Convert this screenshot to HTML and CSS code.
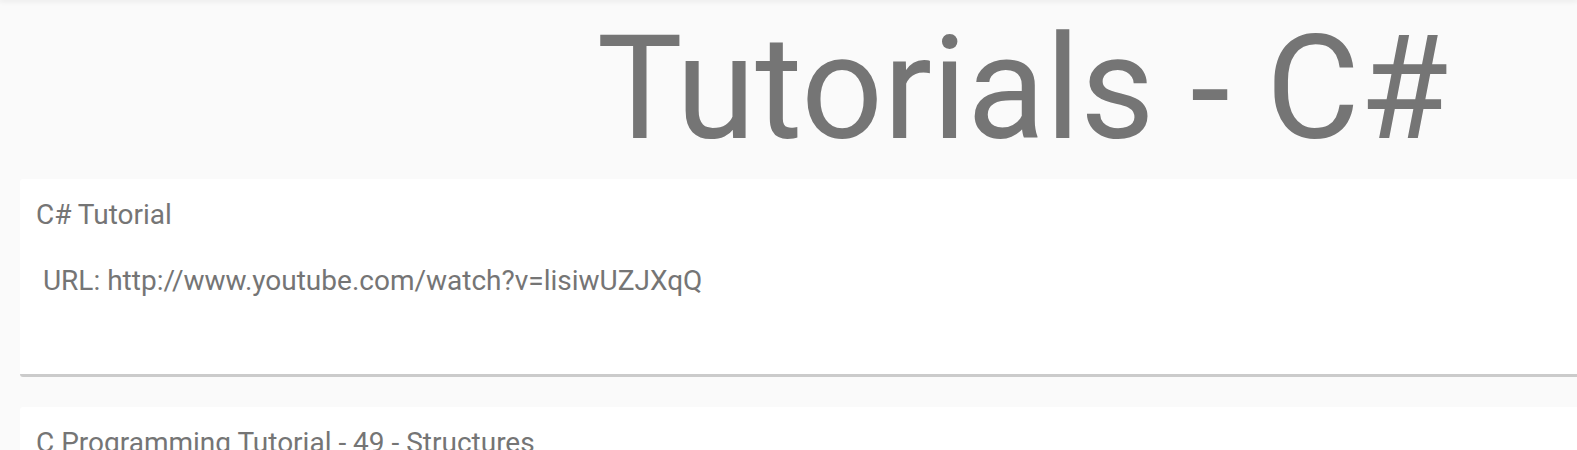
FILE: index.html
```html
<!DOCTYPE html>
<html>
<head>
<meta charset="utf-8">
<title>Tutorials - C#</title>
<link rel="stylesheet" href="styles.css">
</head>
<body>
<div class="topbar"></div>
<main class="page">
  <h1 class="title">Tutorials - C#</h1>
  <section class="card">
    <div class="card-title">C# Tutorial</div>
    <div class="card-url">&nbsp;URL: http://www.youtube.com/watch?v=lisiwUZJXqQ</div>
  </section>
  <section class="card">
    <div class="card-title">C Programming Tutorial - 49 - Structures</div>
    <div class="card-url">&nbsp;URL: http://www.youtube.com/watch?v=</div>
  </section>
</main>
</body>
</html>
```
FILE: styles.css
```css
html, body {
  margin: 0;
  padding: 0;
  background: #fafafa;
  overflow: hidden;
}
body {
  font-family: Roboto, "Liberation Sans", sans-serif;
  color: #757575;
}
.topbar {
  height: 0;
  box-shadow: 0 0 5px 1px rgba(0, 0, 0, 0.12);
}
.page {
  width: 2005px;
  padding: 0 20px;
  display: flex;
  flex-direction: column;
  gap: 30px;
}
.title {
  margin: 4px 0 -24px;
  font-size: 144px;
  font-weight: 400;
  line-height: 169px;
  text-align: center;
  color: #757575;
}
.card {
  background: #fff;
  border-radius: 3px;
  border-bottom: 3px solid #cbcbcb;
  padding: 19px 16px 77px;
  font-size: 28px;
  line-height: 33px;
}
.card-url {
  margin-top: 33px;
}
```
